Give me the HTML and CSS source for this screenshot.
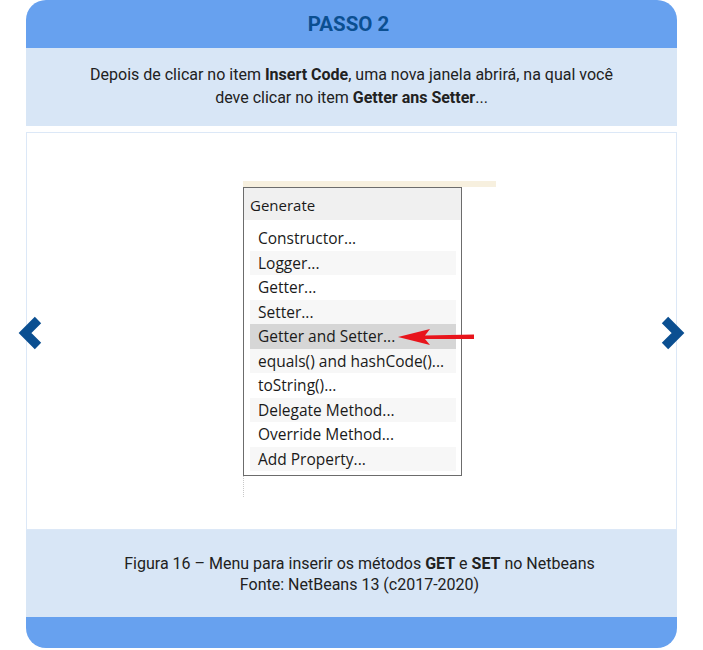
FILE: index.html
```html
<!DOCTYPE html>
<html lang="pt">
<head>
<meta charset="utf-8">
<link rel="stylesheet" href="styles.css">
</head>
<body>
<div class="page">
  <div class="card">
    <div class="header"><h2>PASSO 2</h2></div>
    <div class="intro">
      <p>Depois de clicar no item <b>Insert Code</b>, uma nova janela abrirá, na qual você<br>deve clicar no item <b>Getter ans Setter</b>...</p>
    </div>
    <div class="figure-box">
      <button class="nav prev" aria-label="Anterior">
        <svg width="26" height="34" viewBox="0 0 26 34"><path d="M22 4 L9 17 L22 30" fill="none" stroke="#0b4f91" stroke-width="9" stroke-linejoin="miter"/></svg>
      </button>
      <div class="shot">
        <div class="strip"></div>
        <div class="menu">
          <div class="menu-title">Generate</div>
          <ul class="items">
            <li>Constructor...</li>
            <li>Logger...</li>
            <li>Getter...</li>
            <li>Setter...</li>
            <li class="sel">Getter and Setter...</li>
            <li>equals() and hashCode()...</li>
            <li>toString()...</li>
            <li>Delegate Method...</li>
            <li>Override Method...</li>
            <li>Add Property...</li>
          </ul>
        </div>
        <div class="dots"></div>
        <svg class="arrow" width="80" height="20" viewBox="0 0 80 20"><path d="M0 9 L32 1 L27 7.5 L76 6.5 L76 11 L27 11 L32 17 Z" fill="#e8141b"/></svg>
      </div>
      <button class="nav next" aria-label="Próximo">
        <svg width="26" height="34" viewBox="0 0 26 34"><path d="M4 4 L17 17 L4 30" fill="none" stroke="#0b4f91" stroke-width="9" stroke-linejoin="miter"/></svg>
      </button>
    </div>
    <div class="caption">
      <p>Figura 16 – Menu para inserir os métodos <b>GET</b> e <b>SET</b> no Netbeans<br>Fonte: NetBeans 13 (c2017-2020)</p>
    </div>
    <div class="footer"></div>
  </div>
</div>
</body>
</html>
```
FILE: styles.css
```css
* { box-sizing: border-box; }
html, body { margin: 0; padding: 0; background: #fff; }
body { font-family: Roboto, "Liberation Sans", sans-serif; color: #212121; }
.page { padding: 0 26px 0 26px; }
.card { width: 651px; background: #fff; }
.header { height: 48px; background: #67a1ef; display: flex; align-items: center; justify-content: center; padding-right: 6px; border-radius: 20px 20px 0 0; }
.header h2 { margin: 0; font-size: 20.5px; font-weight: 700; color: #0b4f91; line-height: 1; }
.intro { height: 78px; background: #d8e6f6; padding-top: 15px; text-align: center; }
.intro p, .caption p { margin: 0; font-size: 16px; line-height: 23px; }
.intro b, .caption b { font-weight: 700; }
.figure-box { margin-top: 6px; height: 398px; border: 1px solid #dce8f7; position: relative; }
.nav { position: absolute; top: 183px; width: 26px; height: 34px; border: 0; padding: 0; background: none; display: block; }
.nav svg { display: block; }
.prev { left: -11px; }
.next { right: -11px; }
.shot { position: relative; margin: 48px 0 0 216px; width: 253px; font-family: "Open Sans", "Noto Sans", sans-serif; }
.strip { height: 6px; background: #f7f0df; }
.menu { width: 219px; border: 1px solid #6c6c6c; background: #fff; padding-bottom: 4px; }
.menu-title { height: 32px; background: #f0f0f0; font-size: 15px; padding: 2px 0 0 6px; line-height: 30px; color: #1a1a1a; }
.items { list-style: none; margin: 0; padding: 6px 5px 0 6px; }
.items li { height: 24.5px; line-height: 24.5px; font-size: 15.5px; padding-left: 8px; color: #1a1a1a; white-space: nowrap; }
.items li:nth-child(even) { background: #f7f7f7; }
.items li.sel { background: #d6d6d6; }
.dots { margin-left: 0; width: 1px; height: 21px; border-left: 1px dotted #c8c8c8; }
.arrow { position: absolute; left: 155px; top: 147px; }
.caption { height: 87px; background: #d8e6f6; padding: 23px 0 0 16px; text-align: center; }
.caption p { line-height: 21px; }
.footer { height: 31px; background: #67a1ef; border-radius: 0 0 20px 20px; }
```
